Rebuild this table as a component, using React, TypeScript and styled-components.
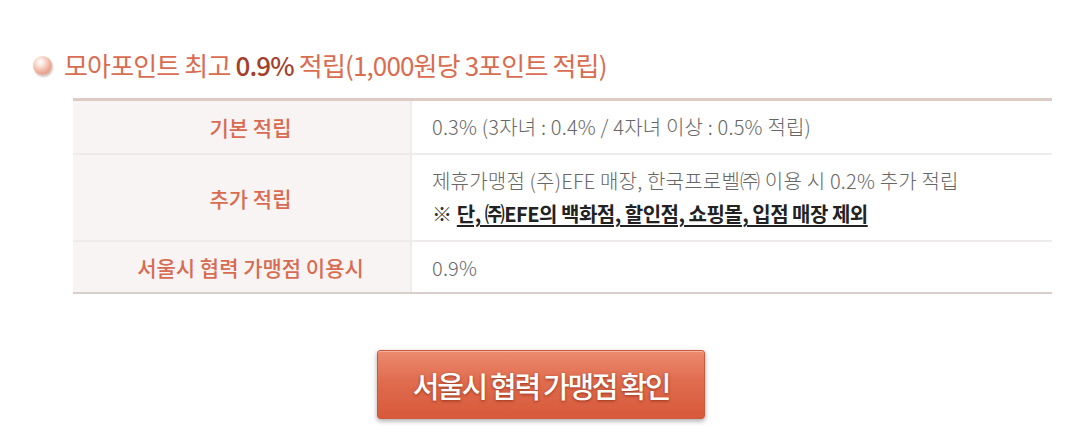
import React from "react";
import styled, { createGlobalStyle } from "styled-components";

const GlobalStyle = createGlobalStyle`
  html, body {
    margin: 0;
    padding: 0;
    background: #ffffff;
  }
  body {
    font-family: "Noto Sans CJK KR", "Noto Sans", sans-serif;
  }
`;

const Page = styled.div`
  width: 1082px;
  height: 427px;
  overflow: hidden;
  background: #fff;
`;

const Title = styled.h2`
  display: flex;
  align-items: center;
  gap: 12px;
  margin: 50px 0 0 33px;
  height: 30px;
  font-size: 26px;
  font-weight: 400;
  letter-spacing: -0.85px;
  line-height: 30px;
  color: #d96c51;
`;

const Bullet = styled.span`
  width: 19px;
  height: 19px;
  border-radius: 50%;
  flex: none;
  background: radial-gradient(
    circle at 38% 32%,
    #ffffff 0%,
    #fbe4dc 22%,
    #eeb3a1 55%,
    #d4826b 100%
  );
  box-shadow: 1px 2px 2px rgba(120, 90, 80, 0.35);
`;

const Strong = styled.b`
  color: #a33f2b;
  font-weight: 500;
`;

const Table = styled.div`
  margin: 18px 30px 0 73px;
  border-top: 3px solid #ddccc5;
  border-bottom: 2px solid #d8cfcb;
`;

const Row = styled.div<{ $last?: boolean }>`
  display: grid;
  grid-template-columns: 339px 1fr;
  border-bottom: ${(p) => (p.$last ? "none" : "2px solid #eeebea")};
`;

const Label = styled.div`
  display: flex;
  align-items: center;
  justify-content: center;
  padding-left: 18px;
  background: #f8f4f3;
  border-right: 2px solid #eeebea;
  font-size: 21px;
  font-weight: 500;
  color: #d86b51;
`;

const Value = styled.div<{ $tight?: boolean }>`
  padding: ${(p) => (p.$tight ? "9px 20px 8px" : "9px 20px 10px")};
  font-size: 20px;
  font-weight: 300;
  line-height: 33px;
  color: #666666;
  letter-spacing: 0.2px;
`;

const Note = styled.div`
  color: #333;
`;

const NoteStrong = styled.span`
  font-weight: 700;
  color: #222;
  letter-spacing: -0.5px;
  text-decoration: underline;
  text-underline-offset: 3px;
  text-decoration-thickness: 2px;
`;

const ButtonWrap = styled.div`
  display: flex;
  justify-content: center;
  margin-top: 56px;
`;

const Button = styled.button`
  width: 328px;
  height: 69px;
  border: 1px solid #d0583c;
  border-radius: 3px;
  background: linear-gradient(180deg, #ec8a6f 0%, #e06c4e 45%, #d8593b 100%);
  box-shadow: 0 2px 5px rgba(0, 0, 0, 0.35), inset 0 1px 0 rgba(255, 255, 255, 0.35);
  color: #fff;
  font-family: "Noto Sans CJK KR", sans-serif;
  font-size: 29px;
  font-weight: 500;
  letter-spacing: -2.3px;
  text-shadow: 0 1px 3px rgba(120, 30, 10, 0.7);
  cursor: pointer;
  padding: 0;
`;

export default function App() {
  return (
    <Page>
      <GlobalStyle />
      <Title>
        <Bullet />
        <span>
          모아포인트 최고 <Strong>0.9%</Strong> 적립(1,000원당 3포인트 적립)
        </span>
      </Title>
      <Table>
        <Row>
          <Label>기본 적립</Label>
          <Value>0.3% (3자녀 : 0.4% / 4자녀 이상 : 0.5% 적립)</Value>
        </Row>
        <Row>
          <Label>추가 적립</Label>
          <Value>
            제휴가맹점 (주)EFE 매장, 한국프로벨㈜ 이용 시 0.2% 추가 적립
            <Note>
              ※ <NoteStrong>단, ㈜EFE의 백화점, 할인점, 쇼핑몰, 입점 매장 제외</NoteStrong>
            </Note>
          </Value>
        </Row>
        <Row $last>
          <Label>서울시 협력 가맹점 이용시</Label>
          <Value $tight>0.9%</Value>
        </Row>
      </Table>
      <ButtonWrap>
        <Button type="button">서울시 협력 가맹점 확인</Button>
      </ButtonWrap>
    </Page>
  );
}
